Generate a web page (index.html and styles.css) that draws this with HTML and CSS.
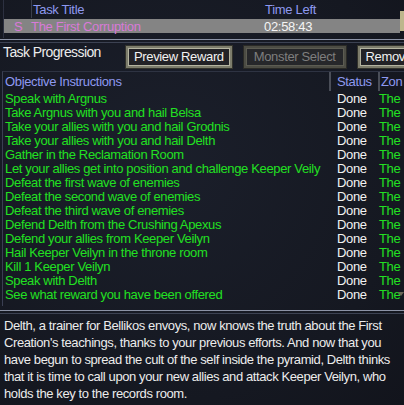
FILE: index.html
```html
<!DOCTYPE html>
<html>
<head>
<meta charset="utf-8">
<link rel="stylesheet" href="styles.css">
</head>
<body>
<div class="screen">
  <div class="tasks">
    <div class="tasks-main">
      <div class="thead">
        <div class="tc-flag"></div>
        <div class="tc-title">Task Title</div>
        <div class="tc-time">Time Left</div>
      </div>
      <div class="trow selected">
        <div class="tc-flag">S</div>
        <div class="tc-title">The First Corruption</div>
        <div class="tc-time time">02:58:43</div>
      </div>
    </div>
    <div class="tasks-scroll"><div class="thumb"></div></div>
  </div>
  <div class="divider"></div>
  <div class="toolbar">
    <div class="label">Task Progression</div>
    <div class="buttons">
      <div class="btn">Preview Reward</div>
      <div class="btn disabled">Monster Select</div>
      <div class="btn">Remove</div>
    </div>
  </div>
  <div class="objectives">
    <div class="ohead">
      <div class="oc-text">Objective Instructions</div>
      <div class="oc-status">Status</div>
      <div class="oc-zone">Zon</div>
    </div>
    <div class="orows">
      <div class="orow"><div class="oc-text">Speak with Argnus</div><div class="oc-status">Done</div><div class="oc-zone">The</div></div>
      <div class="orow"><div class="oc-text">Take Argnus with you and hail Belsa</div><div class="oc-status">Done</div><div class="oc-zone">The</div></div>
      <div class="orow"><div class="oc-text">Take your allies with you and hail Grodnis</div><div class="oc-status">Done</div><div class="oc-zone">The</div></div>
      <div class="orow"><div class="oc-text">Take your allies with you and hail Delth</div><div class="oc-status">Done</div><div class="oc-zone">The</div></div>
      <div class="orow"><div class="oc-text">Gather in the Reclamation Room</div><div class="oc-status">Done</div><div class="oc-zone">The</div></div>
      <div class="orow"><div class="oc-text">Let your allies get into position and challenge Keeper Veily</div><div class="oc-status">Done</div><div class="oc-zone">The</div></div>
      <div class="orow"><div class="oc-text">Defeat the first wave of enemies</div><div class="oc-status">Done</div><div class="oc-zone">The</div></div>
      <div class="orow"><div class="oc-text">Defeat the second wave of enemies</div><div class="oc-status">Done</div><div class="oc-zone">The</div></div>
      <div class="orow"><div class="oc-text">Defeat the third wave of enemies</div><div class="oc-status">Done</div><div class="oc-zone">The</div></div>
      <div class="orow"><div class="oc-text">Defend Delth from the Crushing Apexus</div><div class="oc-status">Done</div><div class="oc-zone">The</div></div>
      <div class="orow"><div class="oc-text">Defend your allies from Keeper Veilyn</div><div class="oc-status">Done</div><div class="oc-zone">The</div></div>
      <div class="orow"><div class="oc-text">Hail Keeper Veilyn in the throne room</div><div class="oc-status">Done</div><div class="oc-zone">The</div></div>
      <div class="orow"><div class="oc-text">Kill 1 Keeper Veilyn</div><div class="oc-status">Done</div><div class="oc-zone">The</div></div>
      <div class="orow"><div class="oc-text">Speak with Delth</div><div class="oc-status">Done</div><div class="oc-zone">The</div></div>
      <div class="orow"><div class="oc-text">See what reward you have been offered</div><div class="oc-status">Done</div><div class="oc-zone">The</div></div>
    </div>
    <div class="oscroll"></div>
  </div>
  <div class="divider low"></div>
  <div class="desc">Delth, a trainer for Bellikos envoys, now knows the truth about the First<br>Creation's teachings, thanks to your previous efforts. And now that you<br>have begun to spread the cult of the self inside the pyramid, Delth thinks<br>that it is time to call upon your new allies and attack Keeper Veilyn, who<br>holds the key to the records room.</div>
</div>
</body>
</html>
```

FILE: styles.css
```css
html, body {
  margin: 0;
  padding: 0;
  background: #161923;
}
.screen {
  width: 404px;
  height: 405px;
  overflow: hidden;
  background: radial-gradient(ellipse at 40% 40%, #1b1f2b 0%, #151821 70%, #12141c 100%);
  font-family: "Liberation Sans", Arial, sans-serif;
  font-size: 13px;
  color: #ececec;
  display: flex;
  flex-direction: column;
}
.tasks {
  height: 38px;
  display: flex;
  margin-left: 3px;
}
.tasks-main {
  flex: 1;
  border-left: 1px solid #2c3040;
  display: flex;
  flex-direction: column;
  letter-spacing: -0.3px;
}
.thead {
  height: 19px;
  display: flex;
  align-items: center;
  color: #8e99f0;
  padding-bottom: 1px;
  box-sizing: border-box;
}
.trow {
  height: 14px;
  display: flex;
  align-items: center;
}
.trow.selected {
  background: #848484;
  color: #d87ad8;
}
.tc-flag {
  width: 27px;
  padding-left: 10px;
  box-sizing: border-box;
}
.thead .tc-flag {
  align-self: stretch;
  border-right: 1px solid #3a3e4c;
  width: 28px;
}
.tc-title {
  width: 233px;
  padding-left: 0;
}
.thead .tc-title {
  width: 232px;
  padding-left: 1px;
}
.time {
  color: #f4f4f4;
}
.tasks-scroll {
  width: 4px;
  display: flex;
  flex-direction: column;
  padding-top: 11px;
}
.thumb {
  height: 20px;
  background: #bdb68c;
}
.divider {
  height: 2px;
  margin-top: 1px;
  border-top: 1px solid #8c93a6;
  border-bottom: 1px solid #3c4252;
}
.toolbar {
  height: 28px;
  display: flex;
  align-items: center;
  overflow: hidden;
}
.label {
  width: 126px;
  flex-shrink: 0;
  padding-left: 3px;
  box-sizing: border-box;
  font-size: 14px;
  letter-spacing: -0.6px;
  align-self: flex-start;
  padding-top: 1px;
}
.buttons {
  display: flex;
  gap: 12px;
  flex-shrink: 0;
}
.btn {
  height: 18px;
  line-height: 18px;
  padding: 0 6px;
  border: 2px solid #7d7d6c;
  box-shadow: inset 0 0 0 1px #b4b4a0, 0 0 0 1px #33332c;
  background: #222226;
  color: #f2f2f2;
  font-size: 13px;
  letter-spacing: -0.35px;
  white-space: nowrap;
  flex-shrink: 0;
}
.btn.disabled {
  color: #7e7e7e;
  border-color: #4c4c44;
  box-shadow: inset 0 0 0 1px #5c5c52, 0 0 0 1px #2a2a26;
  background: #26272a;
  padding: 0 8px;
}
.objectives {
  height: 234px;
  margin-left: 2px;
  border-left: 1px solid #3a3f52;
  border-top: 1px solid #2e3342;
  display: flex;
  flex-direction: column;
  position: relative;
  letter-spacing: -0.35px;
}
.ohead {
  height: 19px;
  display: flex;
  align-items: center;
  color: #8e99f0;
}
.ohead .oc-status, .ohead .oc-zone {
  align-self: stretch;
  display: flex;
  align-items: center;
  border-left: 2px solid #4a4e58;
}
.orows {
  display: flex;
  flex-direction: column;
}
.orow {
  height: 14px;
  display: flex;
  align-items: center;
  color: #22e022;
}
.oc-text {
  width: 326px;
  padding-left: 2px;
  white-space: nowrap;
  overflow: hidden;
  box-sizing: border-box;
}
.oc-status {
  width: 49px;
  padding-left: 8px;
  box-sizing: border-box;
  color: #f2f2f2;
}
.ohead .oc-status {
  color: #8e99f0;
  padding-left: 6px;
}
.oc-zone {
  padding-left: 1px;
  color: #22e022;
}
.ohead .oc-zone {
  color: #8e99f0;
  padding-left: 1px;
}
.oscroll {
  position: absolute;
  right: 0;
  bottom: 10px;
  width: 0;
  height: 0;
  border-left: 3px solid transparent;
  border-right: 3px solid transparent;
  border-top: 4px solid #6b6658;
}
.divider.low {
  margin-top: 4px;
}
.desc {
  padding: 3px 0 0 4px;
  line-height: 17px;
  font-size: 13px;
  letter-spacing: -0.4px;
  color: #ececec;
  white-space: nowrap;
}
```
